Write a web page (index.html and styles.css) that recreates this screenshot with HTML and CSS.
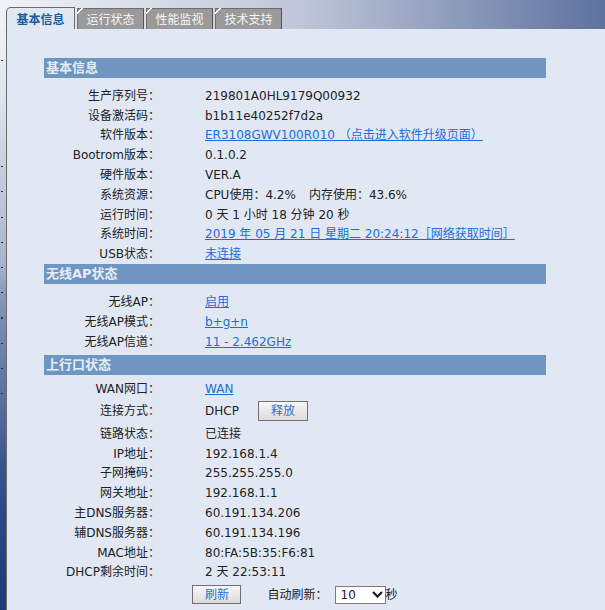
FILE: index.html
```html
<!DOCTYPE html>
<html lang="zh-CN">
<head>
    <meta charset="UTF-8">
    <meta name="viewport" content="width=device-width, initial-scale=1.0">
    <title>基本信息</title>
    <link rel="stylesheet" href="styles.css">
</head>
<body>
    <div class="top">
        <div class="tab active">基本信息</div>
        <div class="tab">运行状态</div>
        <div class="tab">性能监视</div>
        <div class="tab">技术支持</div>
    </div>
    <div class="main">
        <div class="side"></div>
        <div class="content">
            <div class="panel">
                <div class="title">基本信息</div>
                <div class="rows">
                    <div class="row"><span class="label">生产序列号：</span><span class="value">219801A0HL9179Q00932</span></div>
                    <div class="row"><span class="label">设备激活码：</span><span class="value">b1b11e40252f7d2a</span></div>
                    <div class="row"><span class="label">软件版本：</span><span class="value"><a href="#">ER3108GWV100R010 （点击进入软件升级页面）</a></span></div>
                    <div class="row"><span class="label">Bootrom版本：</span><span class="value">0.1.0.2</span></div>
                    <div class="row"><span class="label">硬件版本：</span><span class="value">VER.A</span></div>
                    <div class="row"><span class="label">系统资源：</span><span class="value">CPU使用：4.2%<span class="gap">内存使用：43.6%</span></span></div>
                    <div class="row"><span class="label">运行时间：</span><span class="value">0 天 1 小时 18 分钟 20 秒</span></div>
                    <div class="row"><span class="label">系统时间：</span><span class="value"><a href="#">2019 年 05 月 21 日 星期二 20:24:12［网络获取时间］</a></span></div>
                    <div class="row"><span class="label">USB状态：</span><span class="value"><a href="#">未连接</a></span></div>
                </div>

                <div class="title">无线AP状态</div>
                <div class="rows wlan">
                    <div class="row"><span class="label">无线AP：</span><span class="value"><a href="#">启用</a></span></div>
                    <div class="row"><span class="label">无线AP模式：</span><span class="value"><a href="#">b+g+n</a></span></div>
                    <div class="row"><span class="label">无线AP信道：</span><span class="value"><a href="#">11 - 2.462GHz</a></span></div>
                </div>

                <div class="title">上行口状态</div>
                <div class="rows tight">
                    <div class="row"><span class="label">WAN网口：</span><span class="value"><a href="#">WAN</a></span></div>
                    <div class="row tall"><span class="label">连接方式：</span><span class="value">DHCP<button class="btn release">释放</button></span></div>
                    <div class="row"><span class="label">链路状态：</span><span class="value">已连接</span></div>
                    <div class="row"><span class="label">IP地址：</span><span class="value">192.168.1.4</span></div>
                    <div class="row"><span class="label">子网掩码：</span><span class="value">255.255.255.0</span></div>
                    <div class="row"><span class="label">网关地址：</span><span class="value">192.168.1.1</span></div>
                    <div class="row"><span class="label">主DNS服务器：</span><span class="value">60.191.134.206</span></div>
                    <div class="row"><span class="label">辅DNS服务器：</span><span class="value">60.191.134.196</span></div>
                    <div class="row"><span class="label">MAC地址：</span><span class="value">80:FA:5B:35:F6:81</span></div>
                    <div class="row"><span class="label">DHCP剩余时间：</span><span class="value">2 天 22:53:11</span></div>
                </div>

                <div class="foot">
                    <button class="btn refresh">刷新</button>
                    <span class="auto">自动刷新：</span>
                    <div class="select">
                        <span>10</span>
                        <svg width="11" height="7" viewBox="0 0 11 7"><path d="M1 1 L5.5 5.5 L10 1" fill="none" stroke="#1a1a1a" stroke-width="2.2"/></svg>
                    </div>
                    <span>秒</span>
                </div>
            </div>
        </div>
    </div>
</body>
</html>
```

FILE: styles.css
```css
body {
    margin: 0;
    font-family: "DejaVu Sans", "Noto Sans CJK SC", sans-serif;
    font-size: 12px;
    color: #222;
    background: #e1e8f4;
    width: 605px;
    height: 610px;
    overflow: hidden;
}

a {
    color: #1a6ddb;
    text-decoration: underline;
}

/* tab strip */
.top {
    height: 29px;
    box-sizing: border-box;
    padding-left: 6px;
    display: flex;
    align-items: flex-end;
    gap: 2px;
    background: linear-gradient(to right, #f0f2f7 0%, #bec6d8 50%, #5e729f 100%);
}

.tab {
    position: relative;
    box-sizing: border-box;
    width: 67px;
    height: 21px;
    padding-top: 2px;
    display: flex;
    align-items: center;
    justify-content: center;
    background: #9a9a9a;
    color: #f6f6f6;
    border: 1px solid #6e6e6e;
    border-bottom: none;
    border-right-color: #555;
    line-height: 14px;
}

.tab::before {
    content: "";
    position: absolute;
    left: -1px;
    top: -1px;
    width: 6px;
    height: 6px;
    background: linear-gradient(135deg, transparent 0 38%, #fff 38% 58%, transparent 58%);
}

.tab.active {
    width: 69px;
    height: 22px;
    background: #e1e8f4;
    color: #1a5b9c;
    font-weight: bold;
    border-color: #6a6a6a;
    border-top-left-radius: 5px;
}

.tab.active::before {
    display: none;
}

/* left frame */
.main {
    display: flex;
    height: 581px;
}

.side {
    width: 6px;
    flex: none;
    background:
        linear-gradient(#333, #333) no-repeat 1px 31px / 2px 1px,
        repeating-linear-gradient(to bottom, #333 0 1px, transparent 1px 25.25px) no-repeat 1px 137px / 2px 228px,
        linear-gradient(to bottom, #eef0f6 0%, #e2e6ee 10%, #a9b4cc 40%, #8393b7 47%, #566c9d 65%, #38528a 76%, #2a4583 86%, #1f3a78 100%);
}

.content {
    flex: 1;
    border-left: 1px solid #6b6b6b;
    padding: 29px 0 0 37px;
}

.panel {
    width: 502px;
}

.title {
    height: 20px;
    line-height: 20px;
    padding-left: 2px;
    background: #6f96c0;
    color: #e6edf6;
    font-size: 13px;
    font-weight: bold;
}

.rows {
    padding-top: 8px;
}

.rows.wlan {
    padding-bottom: 3.6px;
}

.rows.tight {
    padding-top: 4px;
}

.row {
    display: flex;
    align-items: center;
    height: 19.8px;
    line-height: 14px;
}

.row.tall {
    height: 25px;
}

.label {
    flex: none;
    width: 116px;
    text-align: right;
    white-space: nowrap;
}

.value {
    padding-left: 45px;
    white-space: nowrap;
    display: flex;
    align-items: center;
}

.gap {
    margin-left: 13px;
}

.btn {
    box-sizing: border-box;
    width: 50px;
    height: 20px;
    padding: 0;
    border: 1px solid #707070;
    background: linear-gradient(#f6f6f6, #dcdcdc);
    color: #2b6fd6;
    font: inherit;
    line-height: 14px;
}

.btn.release {
    margin-left: 19px;
}

.foot {
    height: 24.6px;
    display: flex;
    align-items: center;
    justify-content: center;
    line-height: 14px;
}

.btn.refresh {
    width: 49px;
    height: 19px;
}

.auto {
    margin-left: 26px;
}

.select {
    box-sizing: border-box;
    width: 51px;
    height: 18px;
    margin-left: 7px;
    padding: 0 2px 0 5px;
    display: flex;
    align-items: center;
    justify-content: space-between;
    background: #fff;
    border: 1px solid #7a7a7a;
}
```
